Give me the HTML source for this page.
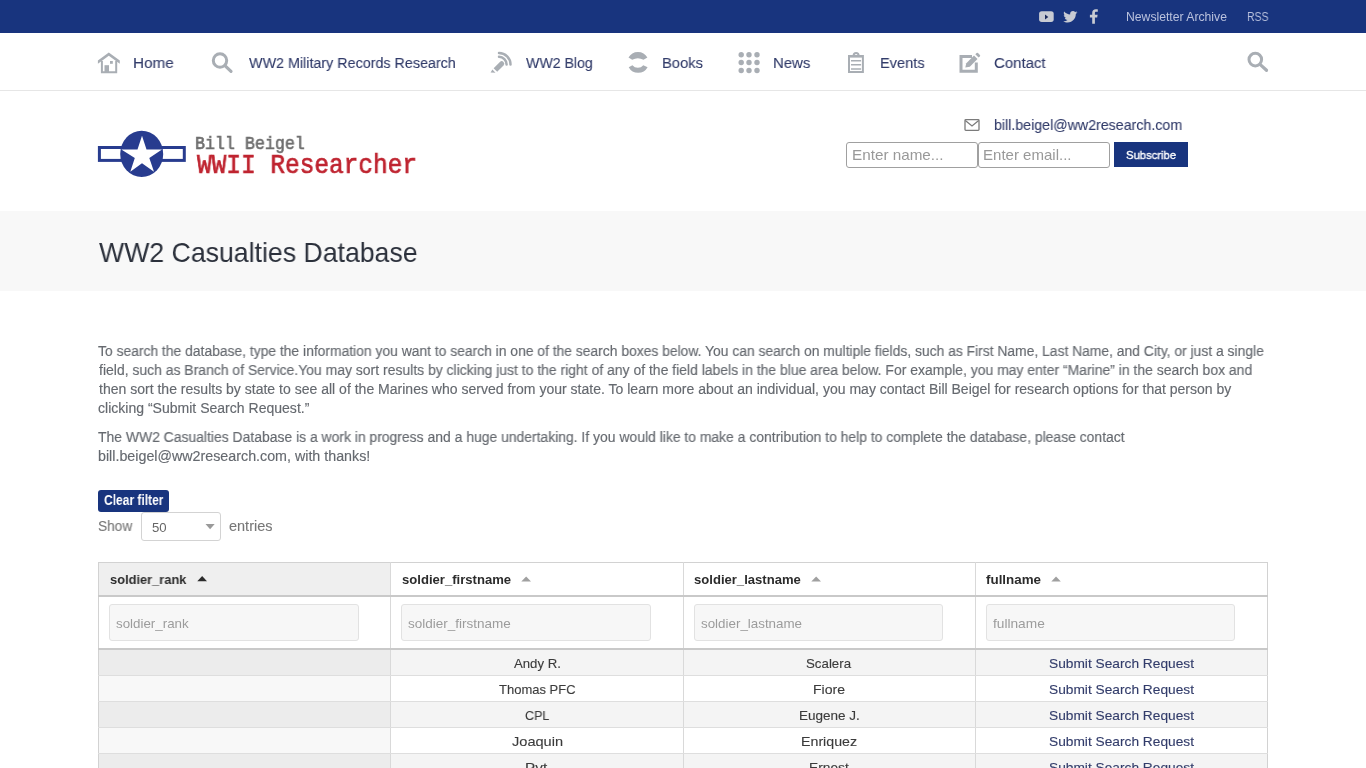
<!DOCTYPE html>
<html lang="en"><head><meta charset="utf-8"><title>WW2 Casualties Database - Bill Beigel WWII Researcher</title>
<style>
html,body{margin:0;padding:0}
body{width:1366px;height:768px;overflow:hidden;background:#fff;font-family:"Liberation Sans",sans-serif;position:relative}
.tx{position:absolute;line-height:0;white-space:nowrap;transform-origin:0 0;display:block;will-change:transform}
.topbar{height:33px;background:#18347e}
.nav{height:57px;border-bottom:1px solid #e6e6e6;background:#fff}
.ico{position:absolute;overflow:visible}
.header{height:120px;background:#fff}
.inp{position:absolute;box-sizing:border-box;border:1px solid #a0a0a0;border-radius:3px;background:#fff}
.btn{position:absolute;box-sizing:border-box;background:#18347e;border-radius:0}
.band{height:80px;background:#f8f8f8}
.sel{position:absolute;box-sizing:border-box;left:141px;top:512px;width:80px;height:29px;border:1px solid #d3d3d3;border-radius:3px;background:#fff}
.tbl{position:absolute;left:98px;top:562px;width:1170px;height:206px;overflow:hidden}
.cell{position:absolute;box-sizing:border-box}
.filt{position:absolute;box-sizing:border-box;height:37px;border:1px solid #e2e2e2;border-radius:3px;background:#f7f7f7}

</style></head>
<body>
<div class="topbar">
  <svg class="ico" style="left:0;top:0" width="1366" height="33" viewBox="0 0 1366 33">
    <!-- youtube -->
    <rect x="1039.1" y="11.2" width="14.6" height="10.7" rx="2.6" fill="#c8cbd3"/>
    <path d="M1045 14.4 L1048.3 16.9 L1045 19.4 Z" fill="#1b2a5c"/>
    <!-- twitter -->
    <path fill="#c8cbd3" d="M1077.3 12.3c-.5.2-1.1.4-1.7.5.6-.4 1.1-.9 1.3-1.6-.6.3-1.2.6-1.8.7-.5-.6-1.3-.9-2.1-.9-1.6 0-2.9 1.3-2.9 2.9 0 .2 0 .5.1.7-2.4-.1-4.6-1.3-6-3-.3.4-.4.9-.4 1.5 0 1 .5 1.9 1.3 2.4-.5 0-.9-.1-1.3-.4 0 1.4 1 2.6 2.3 2.9-.2.1-.5.1-.8.1-.2 0-.4 0-.5-.1.4 1.2 1.4 2 2.7 2-1 .8-2.2 1.2-3.6 1.2h-.7c1.3.8 2.8 1.3 4.4 1.3 5.3 0 8.2-4.4 8.2-8.2v-.4c.6-.4 1.1-.9 1.5-1.5z"/>
    <!-- facebook -->
    <path fill="#c8cbd3" d="M1092.2 23.7v-6.3h-2.3v-2.6h2.3v-1.9c0-2.3 1.4-3.6 3.5-3.6 1 0 1.9.1 2.1.1v2.4h-1.5c-1.1 0-1.4.5-1.4 1.3v1.7h2.7l-.4 2.6h-2.3v6.3z"/>
  </svg>
  <span class="tx" style="left:1125.55px;top:17.00px;font-size:12.2px;color:#b9c1dd;transform:scaleX(0.9995)">Newsletter Archive</span>
  <span class="tx" style="left:1246.98px;top:17.00px;font-size:12.2px;color:#b9c1dd;transform:scaleX(0.8552)">RSS</span>
</div>
<div class="nav">
  <svg class="ico" style="left:0;top:33px" width="1366" height="57" viewBox="0 33 1366 57">
    <g fill="none" stroke="#a9aeb4">
      <!-- home -->
      <path fill="#a9aeb4" stroke="none" d="M97.9 60.6 L108.8 52.6 L119.8 60.6 L119.8 63.8 L108.8 55.8 L97.9 63.8 Z"/>
      <path d="M101.9 61 V72.2 H116.2 V61" stroke-width="2"/>
      <!-- search -->
      <circle cx="220" cy="60.5" r="6.7" stroke-width="3"/>
      <path d="M225.2 65.8 L231 71.3" stroke-width="3.2" stroke-linecap="round"/>
      <!-- blog arcs -->
      <path d="M499 56.8 A7.6 7.6 0 0 1 506.6 64.4" stroke-width="2.5" stroke-linecap="round"/>
      <path d="M499 52.9 A11.5 11.5 0 0 1 510.5 64.4" stroke-width="2.5" stroke-linecap="round"/>
      <!-- books -->
      <path fill="#a9aeb4" stroke="none" d="M628.5 57.6 A10.8 10.8 0 0 1 647.4 57.6 L643.5 59.7 A12 12 0 0 0 632.2 59.7 Z"/>
      <path fill="#a9aeb4" stroke="none" d="M628.7 67.3 A10.8 10.8 0 0 0 647.6 67.3 L643.3 65.2 A7 7 0 0 1 632.4 65.2 Z"/>
      <!-- events clipboard -->
      <rect x="849" y="56" width="13.9" height="16" stroke-width="2"/>
      <path d="M851 60.7 H861.1 M851 64.8 H861.1 M851 68.9 H861.1" stroke-width="1.5"/>
      <path d="M853.6 55.6 A2.5 2.5 0 0 1 858.6 55.6" stroke-width="2"/>
      <!-- contact -->
      <path d="M972 56.5 H961 V71.3 H976.3 V62.5" stroke-width="3"/>
      <!-- search right -->
      <circle cx="1255.3" cy="59.6" r="6.3" stroke-width="3"/>
      <path d="M1260.3 64.6 L1266.5 70.3" stroke-width="3.2" stroke-linecap="round"/>
    </g>
    <g fill="#a9aeb4">
      <rect x="104.5" y="65.2" width="4.5" height="7"/>
      <rect x="110" y="61" width="2.8" height="2.8"/>
      <!-- pencil (blog) -->
      <path d="M493.6 68.2 L499.9 61.9 A2.5 2.5 0 0 1 503.5 65.5 L497.2 71.8 Z"/>
      <path d="M490.6 72.6 L492.4 69.6 L495.5 72.8 Z"/>
      <!-- news dots -->
      <circle cx="741.2" cy="54.8" r="2.7"/><circle cx="749" cy="54.8" r="2.7"/><circle cx="757" cy="54.8" r="2.7"/>
      <circle cx="741.2" cy="62.5" r="2.7"/><circle cx="749" cy="62.5" r="2.7"/><circle cx="757" cy="62.5" r="2.7"/>
      <circle cx="741.2" cy="70.5" r="2.7"/><circle cx="749" cy="70.5" r="2.7"/><circle cx="757" cy="70.5" r="2.7"/>
      <rect x="850" y="55" width="12" height="2.6"/>
      <!-- contact pencil -->
      <path d="M965.3 67.6 L966.3 63.3 L974 55.6 L977.5 59.1 L969.8 66.8 Z"/>
      <path d="M975.3 54.3 L976.6 53 A1 1 0 0 1 978 53 L979.9 54.9 A1 1 0 0 1 979.9 56.3 L978.6 57.6 Z"/>
    </g>
  </svg>
  <span class="tx" style="left:132.81px;top:63.00px;font-size:15.5px;color:#323c6a;transform:scaleX(0.9846);-webkit-text-stroke:0.12px #323c6a">Home</span> <span class="tx" style="left:249.00px;top:63.00px;font-size:15.5px;color:#323c6a;transform:scaleX(0.9235);-webkit-text-stroke:0.12px #323c6a">WW2 Military Records Research</span> <span class="tx" style="left:526.00px;top:63.00px;font-size:15.5px;color:#323c6a;transform:scaleX(0.9124);-webkit-text-stroke:0.12px #323c6a">WW2 Blog</span> <span class="tx" style="left:662.45px;top:63.00px;font-size:15.5px;color:#323c6a;transform:scaleX(0.9521);-webkit-text-stroke:0.12px #323c6a">Books</span> <span class="tx" style="left:772.83px;top:63.00px;font-size:15.5px;color:#323c6a;transform:scaleX(0.9632);-webkit-text-stroke:0.12px #323c6a">News</span> <span class="tx" style="left:879.86px;top:63.00px;font-size:15.5px;color:#323c6a;transform:scaleX(0.9411);-webkit-text-stroke:0.12px #323c6a">Events</span> <span class="tx" style="left:994.30px;top:63.00px;font-size:15.5px;color:#323c6a;transform:scaleX(0.9669);-webkit-text-stroke:0.12px #323c6a">Contact</span>
</div>
<div class="header">
  <svg class="ico" style="left:90px;top:120px" width="100" height="66" viewBox="90 120 100 66">
    <rect x="99.4" y="147.5" width="84.9" height="12.9" fill="none" stroke="#283c8f" stroke-width="3"/>
    <ellipse cx="141.7" cy="153.9" rx="21.5" ry="23.2" fill="#283c8f"/>
    <path fill="#fff" d="M142 135.7 L146.5 149.4 L162 149.4 L149.3 158 L154 171.7 L142 163.2 L130.3 171.7 L134.8 158 L121.3 149.4 L137.5 149.4 Z"/>
  </svg>
  <span class="tx" style="left:194.60px;top:143.60px;font-size:18.75px;color:#6f6f6f;transform:scaleX(0.8878);font-family:'Liberation Mono',monospace;-webkit-text-stroke:0.6px #6f6f6f">Bill Beigel</span>
  <span class="tx" style="left:196.70px;top:165.50px;font-size:27.5px;color:#bf2430;transform:scaleX(0.8890);font-family:'Liberation Mono',monospace;-webkit-text-stroke:0.7px #bf2430">WWII Researcher</span>
  <svg class="ico" style="left:960px;top:115px" width="24" height="20" viewBox="960 115 24 20">
    <rect x="965" y="119.7" width="14" height="10.6" rx="0.8" fill="none" stroke="#7b7b7b" stroke-width="1.3"/>
    <path d="M965.3 120.5 L972 126 L978.7 120.5" fill="none" stroke="#7b7b7b" stroke-width="1.3"/>
  </svg>
  <span class="tx" style="left:994.41px;top:125.00px;font-size:15px;color:#323c6a;transform:scaleX(0.9471);-webkit-text-stroke:0.12px #323c6a">bill.beigel@ww2research.com</span>
  <div class="inp" style="left:846px;top:142px;width:132px;height:26px"></div>
  <div class="inp" style="left:978px;top:142px;width:132px;height:26px"></div>
  <span class="tx" style="left:851.81px;top:155.00px;font-size:14.5px;color:#999999;transform:scaleX(1.0520)">Enter name...</span> <span class="tx" style="left:983.33px;top:155.00px;font-size:14.5px;color:#999999;transform:scaleX(1.0364)">Enter email...</span>
  <div class="btn" style="left:1114px;top:142px;width:74px;height:25px"></div>
  <span class="tx" style="left:1125.65px;top:155.00px;font-size:11.5px;color:#ffffff;transform:scaleX(0.9799);-webkit-text-stroke:0.35px #fff">Subscribe</span>
</div>
<div class="band"><span class="tx" style="left:99.00px;top:252.00px;font-size:28.5px;color:#2b303b;transform:scaleX(0.9355)">WW2 Casualties Database</span></div>
<div class="content">
  <span class="tx" style="left:98.38px;top:351.00px;font-size:14px;color:#65696f;transform:scaleX(0.9903);-webkit-text-stroke:0.15px #65696f">To search the database, type the information you want to search in one of the search boxes below. You can search on multiple fields, such as First Name, Last Name, and City, or just a single</span> <span class="tx" style="left:98.60px;top:370.00px;font-size:14px;color:#65696f;transform:scaleX(0.9963);-webkit-text-stroke:0.15px #65696f">field, such as Branch of Service.You may sort results by clicking just to the right of any of the field labels in the blue area below. For example, you may enter “Marine” in the search box and</span> <span class="tx" style="left:98.60px;top:389.00px;font-size:14px;color:#65696f;transform:scaleX(1.0017);-webkit-text-stroke:0.15px #65696f">then sort the results by state to see all of the Marines who served from your state. To learn more about an individual, you may contact Bill Beigel for research options for that person by</span> <span class="tx" style="left:98.16px;top:408.00px;font-size:14px;color:#65696f;transform:scaleX(1.0023);-webkit-text-stroke:0.15px #65696f">clicking “Submit Search Request.”</span> <span class="tx" style="left:98.38px;top:437.00px;font-size:14px;color:#65696f;transform:scaleX(0.9941);-webkit-text-stroke:0.15px #65696f">The WW2 Casualties Database is a work in progress and a huge undertaking. If you would like to make a contribution to help to complete the database, please contact</span> <span class="tx" style="left:97.71px;top:456.00px;font-size:14px;color:#65696f;transform:scaleX(1.0194);-webkit-text-stroke:0.15px #65696f">bill.beigel@ww2research.com, with thanks!</span>
  <div class="btn" style="left:98px;top:490px;width:71px;height:22px;border-radius:3px"></div>
  <span class="tx" style="left:104.22px;top:501.00px;font-size:13.8px;color:#ffffff;transform:scaleX(0.8709);font-weight:bold">Clear filter</span>
  <span class="tx" style="left:98.07px;top:526.00px;font-size:14px;color:#777;transform:scaleX(0.9783);-webkit-text-stroke:0.12px #777">Show</span>
  <div class="sel"></div>
  <span class="tx" style="left:151.79px;top:528.00px;font-size:13px;color:#666;transform:scaleX(1.0124)">50</span>
  <svg class="ico" style="left:200px;top:520px" width="20" height="14" viewBox="200 520 20 14"><path d="M205.5 524 L214.7 524 L210.1 529.2 Z" fill="#9a9a9a"/></svg>
  <span class="tx" style="left:228.95px;top:526.00px;font-size:14px;color:#777;transform:scaleX(1.0353);-webkit-text-stroke:0.12px #777">entries</span>
  <div class="tbl">
    <div class="cell" style="left:1px;top:1px;width:291px;height:32px;background:#efefef"></div>
    <div class="cell" style="left:1px;top:88px;width:291px;height:25px;background:#ececec"></div>
    <div class="cell" style="left:293px;top:88px;width:876px;height:25px;background:#f4f4f4"></div>
    <div class="cell" style="left:1px;top:114px;width:291px;height:25px;background:#f8f8f8"></div>
    <div class="cell" style="left:1px;top:140px;width:291px;height:25px;background:#ececec"></div>
    <div class="cell" style="left:293px;top:140px;width:876px;height:25px;background:#f4f4f4"></div>
    <div class="cell" style="left:1px;top:166px;width:291px;height:25px;background:#f8f8f8"></div>
    <div class="cell" style="left:1px;top:192px;width:291px;height:25px;background:#ececec"></div>
    <div class="cell" style="left:293px;top:192px;width:876px;height:25px;background:#f4f4f4"></div>
    <!-- borders -->
    <div class="cell" style="left:0;top:0;width:1170px;height:1px;background:#d2d2d2"></div>
    <div class="cell" style="left:0;top:0;width:1px;height:206px;background:#d2d2d2"></div>
    <div class="cell" style="left:1169px;top:0;width:1px;height:206px;background:#d2d2d2"></div>
    <div class="cell" style="left:292px;top:0;width:1px;height:206px;background:#d9d9d9"></div>
    <div class="cell" style="left:585px;top:0;width:1px;height:206px;background:#d9d9d9"></div>
    <div class="cell" style="left:877px;top:0;width:1px;height:206px;background:#d9d9d9"></div>
    <div class="cell" style="left:0;top:33px;width:1170px;height:2px;background:#c9c9c9"></div>
    <div class="cell" style="left:0;top:86px;width:1170px;height:2px;background:#c9c9c9"></div>
    <div class="cell" style="left:0;top:113px;width:1170px;height:1px;background:#dedede"></div>
    <div class="cell" style="left:0;top:139px;width:1170px;height:1px;background:#dedede"></div>
    <div class="cell" style="left:0;top:165px;width:1170px;height:1px;background:#dedede"></div>
    <div class="cell" style="left:0;top:191px;width:1170px;height:1px;background:#dedede"></div>
    <!-- filter inputs -->
    <div class="filt" style="left:11px;top:42px;width:250px"></div>
    <div class="filt" style="left:303px;top:42px;width:250px"></div>
    <div class="filt" style="left:596px;top:42px;width:249px"></div>
    <div class="filt" style="left:888px;top:42px;width:249px"></div>
    <svg class="ico" style="left:0;top:0" width="1170" height="40" viewBox="98 562 1170 40">
      <path d="M197.3 581.2 L207 581.2 L202.15 576 Z" fill="#2b2b2b"/>
      <path d="M521.3 581.5 L531 581.5 L526.15 576.5 Z" fill="#a0a0a0"/>
      <path d="M811.3 581.5 L821 581.5 L816.15 576.5 Z" fill="#a0a0a0"/>
      <path d="M1051.3 581.5 L1060.8 581.5 L1056.05 576.5 Z" fill="#a0a0a0"/>
    </svg>
  </div>
  <span class="tx" style="left:109.50px;top:580.00px;font-size:13px;color:#2b2b2b;transform:scaleX(0.9884);font-weight:bold">soldier_rank</span>
<span class="tx" style="left:401.59px;top:580.00px;font-size:13px;color:#2b2b2b;transform:scaleX(1.0070);font-weight:bold">soldier_firstname</span>
<span class="tx" style="left:693.89px;top:580.00px;font-size:13px;color:#2b2b2b;transform:scaleX(1.0058);font-weight:bold">soldier_lastname</span>
<span class="tx" style="left:986.09px;top:580.00px;font-size:13px;color:#2b2b2b;transform:scaleX(1.0297);font-weight:bold">fullname</span>
<span class="tx" style="left:115.99px;top:624.00px;font-size:13px;color:#9c9c9c;transform:scaleX(1.0266)">soldier_rank</span>
<span class="tx" style="left:408.49px;top:624.00px;font-size:13px;color:#9c9c9c;transform:scaleX(1.0391)">soldier_firstname</span>
<span class="tx" style="left:700.69px;top:624.00px;font-size:13px;color:#9c9c9c;transform:scaleX(1.0282)">soldier_lastname</span>
<span class="tx" style="left:993.20px;top:624.00px;font-size:13px;color:#9c9c9c;transform:scaleX(1.0533)">fullname</span>
<span class="tx" style="left:514.00px;top:664.00px;font-size:13px;color:#3b3b3b;transform:scaleX(1.0140);-webkit-text-stroke:0.12px #3b3b3b">Andy R.</span>
<span class="tx" style="left:806.48px;top:664.00px;font-size:13px;color:#3b3b3b;transform:scaleX(1.0216);-webkit-text-stroke:0.12px #3b3b3b">Scalera</span>
<span class="tx" style="left:1048.77px;top:664.00px;font-size:13px;color:#323c6a;transform:scaleX(1.0560);-webkit-text-stroke:0.12px #323c6a">Submit Search Request</span>
<span class="tx" style="left:499.30px;top:690.00px;font-size:13px;color:#3b3b3b;transform:scaleX(0.9984);-webkit-text-stroke:0.12px #3b3b3b">Thomas PFC</span>
<span class="tx" style="left:812.90px;top:690.00px;font-size:13px;color:#3b3b3b;transform:scaleX(1.0828);-webkit-text-stroke:0.12px #3b3b3b">Fiore</span>
<span class="tx" style="left:1048.77px;top:690.00px;font-size:13px;color:#323c6a;transform:scaleX(1.0560);-webkit-text-stroke:0.12px #323c6a">Submit Search Request</span>
<span class="tx" style="left:524.71px;top:716.00px;font-size:13px;color:#3b3b3b;transform:scaleX(0.9628);-webkit-text-stroke:0.12px #3b3b3b">CPL</span>
<span class="tx" style="left:798.94px;top:716.00px;font-size:13px;color:#3b3b3b;transform:scaleX(1.0398);-webkit-text-stroke:0.12px #3b3b3b">Eugene J.</span>
<span class="tx" style="left:1048.77px;top:716.00px;font-size:13px;color:#323c6a;transform:scaleX(1.0560);-webkit-text-stroke:0.12px #323c6a">Submit Search Request</span>
<span class="tx" style="left:511.77px;top:742.00px;font-size:13px;color:#3b3b3b;transform:scaleX(1.1210);-webkit-text-stroke:0.12px #3b3b3b">Joaquin</span>
<span class="tx" style="left:801.19px;top:742.00px;font-size:13px;color:#3b3b3b;transform:scaleX(1.0929);-webkit-text-stroke:0.12px #3b3b3b">Enriquez</span>
<span class="tx" style="left:1048.77px;top:742.00px;font-size:13px;color:#323c6a;transform:scaleX(1.0560);-webkit-text-stroke:0.12px #323c6a">Submit Search Request</span>
<span class="tx" style="left:524.80px;top:768.00px;font-size:13px;color:#3b3b3b;transform:scaleX(1.1790);-webkit-text-stroke:0.12px #3b3b3b">Pvt</span>
<span class="tx" style="left:808.92px;top:768.00px;font-size:13px;color:#3b3b3b;transform:scaleX(1.0587);-webkit-text-stroke:0.12px #3b3b3b">Ernest</span>
<span class="tx" style="left:1048.77px;top:768.00px;font-size:13px;color:#323c6a;transform:scaleX(1.0560);-webkit-text-stroke:0.12px #323c6a">Submit Search Request</span>
</div>

</body></html>
